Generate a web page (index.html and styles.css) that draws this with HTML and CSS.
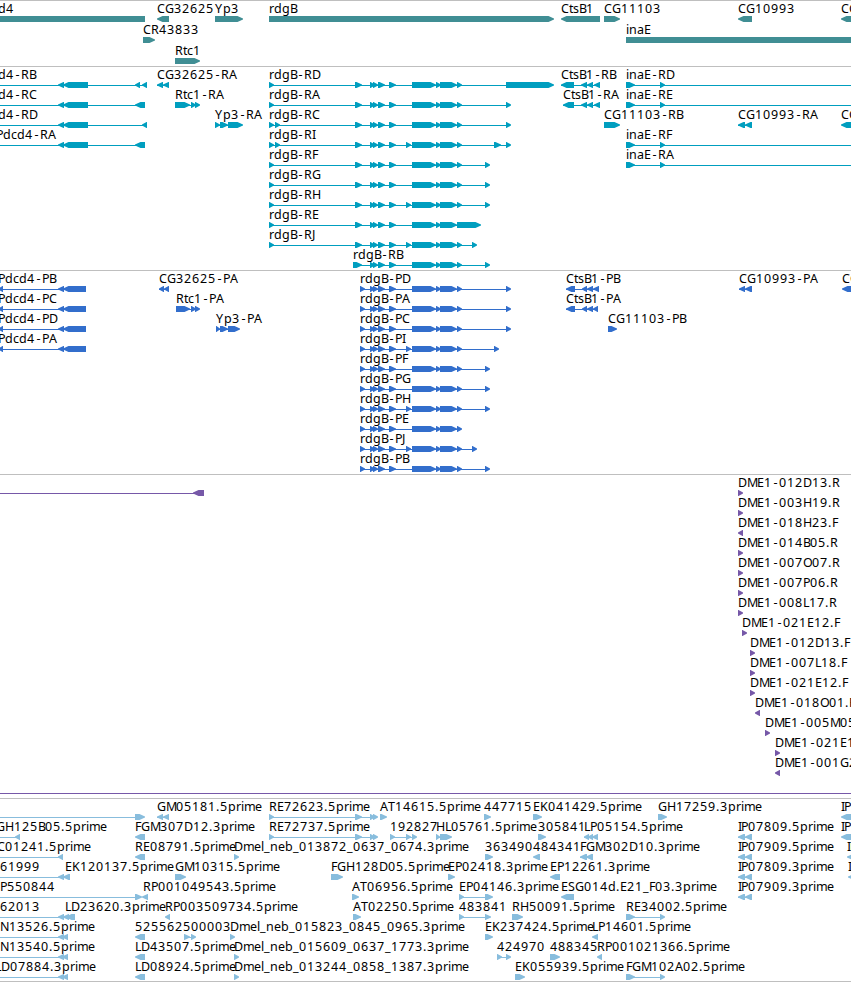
FILE: index.html
```html
<!DOCTYPE html>
<html>

<head>
  <meta charset="utf-8">
  <meta name="viewport" content="width=device-width">
  <title>Genome tracks</title>
  <link rel="stylesheet" href="styles.css">
</head>

<body>
  <main>
    <svg class="track genes" id="genes"></svg>
    <svg class="track transcripts" id="transcripts"></svg>
    <svg class="track proteins" id="proteins"></svg>
    <svg class="track clones" id="clones"></svg>
    <svg class="track ests" id="ests"></svg>
  </main>

  <script src="tracks.js"></script>
</body>

</html>
```

FILE: styles.css
```css
* {
  box-sizing: border-box;
}

body {
  margin: 0;
  background-color: white;
  overflow: hidden;
}

main {
  display: flex;
  flex-direction: column;
  width: 100%;
  border-bottom: 1px solid #bfbfbf;
}

.track {
  display: block;
  width: 100%;
  flex-shrink: 0;
  border-top: 1px solid #bfbfbf;
  overflow: hidden;
}

.track text {
  font-family: "Noto Sans", "DejaVu Sans", sans-serif;
  font-size: 12.5px;
  fill: black;
}

.genes {
  height: 66px;
  color: #408e94;
}

.transcripts {
  height: 204px;
  color: #009ebf;
}

.proteins {
  height: 204px;
  color: #326ecc;
}

.clones {
  height: 324px;
  color: #7658a8;
}

.ests {
  height: 183px;
  color: #88bddd;
}

.line,
.block {
  fill: currentColor;
}

.line {
  shape-rendering: crispEdges;
}
```

FILE: tracks.js
```js
// advance of each character in a label, digits are all 8
const widths = {
  A: 8, B: 7, C: 8, D: 9, E: 7, F: 6, G: 9, H: 9, I: 3, J: 3, K: 8, L: 6, M: 10,
  N: 9, O: 9, P: 7, R: 8, S: 7, T: 7, Y: 8,
  a: 7, b: 8, c: 6, d: 8, e: 7, g: 8, i: 3, l: 3, m: 11, n: 8, p: 8, r: 5, s: 6, t: 4,
  '-': 7, '_': 6, '.': 4
};

// every feature is [row, x, label, strand, block start, block end, ...]
const genes = [
  [0, -23, 'Pdcd4', 0, -23, 145],
  [0, 157, 'CG32625', '<', 157, 169],
  [0, 215, 'Yp3', '>', 215, 243],
  [0, 269, 'rdgB', '>', 269, 554],
  [0, 561, 'CtsB1', '<', 561, 600],
  [0, 604, 'CG11103', '>', 604, 620],
  [0, 738, 'CG10993', '<', 738, 752],
  [0, 841, 'CG10990', '<', 841, 870],
  [1, 143, 'CR43833', '>', 143, 155],
  [1, 626, 'inaE', '>', 626, 900],
  [2, 175, 'Rtc1', '>', 175, 200]
];

const body = [370, 375, 373, 378, 378, 385, 389, 396];
const tail = [412, 436, 436, 441, 440, 457];
const last = [457, 462];
const extra = [406, 411];
const start = [269, 274, 355, 362];
const start2 = [269, 274, 275, 280, 355, 362];

const transcripts = [
  [0, -23, 'Pdcd4-RB', '<', -40, -35, 58, 64, 63, 88, 135, 140, 142, 147],
  [1, -23, 'Pdcd4-RC', '<', -40, -35, 58, 64, 63, 88, 135, 145],
  [2, -23, 'Pdcd4-RD', '<', -40, -35, 58, 64, 63, 88, 142, 147],
  [3, -4, 'Pdcd4-RA', '<', -40, -35, 58, 64, 63, 88, 135, 145],
  [0, 157, 'CG32625-RA', '<', 157, 163, 163, 169],
  [1, 175, 'Rtc1-RA', '>', 175, 190, 191, 196, 195, 200],
  [2, 215, 'Yp3-RA', '>', 215, 220, 220, 228, 228, 243],
  [0, 269, 'rdgB-RD', '>', ...start, ...body, ...tail, ...last, 506, 554],
  [1, 269, 'rdgB-RA', '>', ...start, ...body, ...tail, ...last, 506, 511],
  [2, 269, 'rdgB-RC', '>', ...start2, ...body, ...tail, ...last, 506, 511],
  [3, 269, 'rdgB-RI', '>', ...start2, ...body, ...extra, ...tail, ...last, 494, 501, 506, 511],
  [4, 269, 'rdgB-RF', '>', ...start, ...body, ...tail, ...last, 485, 490],
  [5, 269, 'rdgB-RG', '>', ...start, ...body, ...tail, ...last, 485, 490],
  [6, 269, 'rdgB-RH', '>', ...start, ...body, ...extra, ...tail, ...last, 485, 490],
  [7, 269, 'rdgB-RE', '>', ...start, ...body, ...tail, 457, 481],
  [8, 269, 'rdgB-RJ', '>', ...start, ...body, ...extra, ...tail, ...last, 472, 477],
  [9, 353, 'rdgB-RB', '>', 353, 362, ...body, ...tail, ...last, 485, 490],
  [0, 561, 'CtsB1-RB', '<', 561, 574, 581, 587, 587, 593, 594, 600],
  [1, 563, 'CtsB1-RA', '<', 563, 574, 581, 587, 587, 593, 594, 600],
  [2, 604, 'CG11103-RB', '>', 604, 620],
  [0, 626, 'inaE-RD', '>', 626, 635, 660, 665, 900, 905],
  [1, 626, 'inaE-RE', '>', 626, 635, 660, 665, 900, 905],
  [3, 626, 'inaE-RF', '>', 626, 635, 660, 665, 900, 905],
  [4, 626, 'inaE-RA', '>', 626, 635, 660, 665, 900, 905],
  [2, 738, 'CG10993-RA', '<', 738, 745, 745, 752],
  [2, 841, 'CG10990-RA', '<', 841, 870]
];

const proteins = [
  [0, -2, 'Pdcd4-PB', '<', -2, 3, 58, 64, 63, 86],
  [1, -2, 'Pdcd4-PC', '<', -2, 3, 58, 64, 63, 86],
  [2, -2, 'Pdcd4-PD', '<', -2, 3, 58, 64, 63, 86],
  [3, -2, 'Pdcd4-PA', '<', -2, 3, 58, 64, 63, 86],
  [0, 159, 'CG32625-PA', '<', 159, 164, 164, 169],
  [1, 176, 'Rtc1-PA', '>', 176, 190, 191, 196, 195, 200],
  [2, 216, 'Yp3-PA', '>', 216, 220, 220, 228, 228, 240],
  [0, 360, 'rdgB-PD', '>', 360, 365, ...body, ...tail, ...last, 506, 511],
  [1, 360, 'rdgB-PA', '>', 360, 365, ...body, ...tail, ...last, 506, 511],
  [2, 360, 'rdgB-PC', '>', 360, 365, ...body, ...tail, ...last, 506, 511],
  [3, 360, 'rdgB-PI', '>', 360, 365, ...body, ...extra, ...tail, ...last, 494, 499],
  [4, 360, 'rdgB-PF', '>', 360, 365, ...body, ...tail, ...last, 485, 490],
  [5, 360, 'rdgB-PG', '>', 360, 365, ...body, ...tail, ...last, 485, 490],
  [6, 360, 'rdgB-PH', '>', 360, 365, ...body, ...extra, ...tail, ...last, 485, 490],
  [7, 360, 'rdgB-PE', '>', 360, 365, ...body, ...tail, ...last],
  [8, 360, 'rdgB-PJ', '>', 360, 365, ...body, ...extra, ...tail, ...last, 472, 477],
  [9, 360, 'rdgB-PB', '>', 360, 365, ...body, ...tail, ...last, 485, 490],
  [0, 566, 'CtsB1-PB', '<', 566, 575, 582, 587, 587, 593, 593, 599],
  [1, 566, 'CtsB1-PA', '<', 566, 575, 582, 587, 587, 593, 593, 598],
  [2, 608, 'CG11103-PB', '>', 608, 617],
  [0, 739, 'CG10993-PA', '<', 739, 745, 745, 752],
  [0, 842, 'CG10990-PA', '<', 842, 870]
];

const clones = [
  [0, 0, '', '<', -40, -35, 193, 204],
  [0, 738, 'DME1-012D13.R', '>', 738, 743],
  [1, 738, 'DME1-003H19.R', '>', 738, 743],
  [2, 738, 'DME1-018H23.F', '<', 738, 743],
  [3, 738, 'DME1-014B05.R', '>', 738, 743],
  [4, 738, 'DME1-007O07.R', '>', 738, 743],
  [5, 738, 'DME1-007P06.R', '>', 738, 743],
  [6, 738, 'DME1-008L17.R', '>', 738, 743],
  [7, 742, 'DME1-021E12.F', '>', 742, 747],
  [8, 750, 'DME1-012D13.F', '>', 750, 755],
  [9, 750, 'DME1-007L18.F', '>', 750, 755],
  [10, 750, 'DME1-021E12.F', '>', 750, 755],
  [11, 755, 'DME1-018O01.F', '<', 755, 760],
  [12, 765, 'DME1-005M05.F', '>', 765, 770],
  [13, 775, 'DME1-021E12.R', '>', 775, 780],
  [14, 775, 'DME1-001G23.F', '<', 775, 780],
  [15, 0, '', '>', -40, -35, 900, 905]
];

const ests = [
  [0, 0, '', '>', -40, -35, 135, 145],
  [0, 157, 'GM05181.5prime', '<', 157, 163, 163, 169],
  [0, 269, 'RE72623.5prime', '>', 269, 274, 355, 362, 370, 375, 373, 378],
  [0, 380, 'AT14615.5prime', '>', 380, 387],
  [0, 484, '447715', '>', 484, 491],
  [0, 533, 'EK041429.5prime', '>', 533, 542],
  [0, 658, 'GH17259.3prime', '>', 658, 667],
  [0, 841, 'IP07810.5prime', '<', 841, 870],
  [1, -4, 'GH125B05.5prime', '<', -40, -35, 15, 20],
  [1, 135, 'FGM307D12.3prime', '<', 135, 145],
  [1, 269, 'RE72737.5prime', '>', 269, 274, 355, 362, 370, 375, 373, 378],
  [1, 390, '192827', '>', 390, 395, 406, 411, 412, 417],
  [1, 436, 'HL05761.5prime', '>', 436, 440, 440, 452],
  [1, 538, '305841', '>', 538, 546],
  [1, 584, 'LP05154.5prime', '<', 584, 589, 588, 593, 592, 598],
  [1, 738, 'IP07809.5prime', '<', 738, 745, 745, 752],
  [1, 841, 'IP07910.5prime', '<', 841, 870],
  [2, -3, 'C01241.5prime', '<', -40, -35, 58, 63],
  [2, 135, 'RE08791.5prime', '<', 135, 145],
  [2, 234, 'Dmel_neb_013872_0637_0674.3prime', '>', 234, 239],
  [2, 485, '363490', '>', 485, 493],
  [2, 533, '484341', '<', 533, 540],
  [2, 580, 'FGM302D10.3prime', '<', 580, 587, 586, 593],
  [2, 738, 'IP07909.5prime', '<', 738, 745, 745, 752],
  [2, 847, 'IP07810.3prime', '<', 847, 870],
  [3, 0, '61999', '<', -40, -35, 58, 64],
  [3, 65, 'EK120137.5prime', '<', 63, 70],
  [3, 175, 'GM10315.5prime', '>', 175, 186],
  [3, 331, 'FGH128D05.5prime', '>', 331, 343],
  [3, 448, 'EP02418.3prime', '>', 448, 455],
  [3, 550, 'EP12261.3prime', '<', 550, 560],
  [3, 738, 'IP07809.3prime', '<', 738, 745, 745, 752],
  [3, 848, 'IP07910.3prime', '<', 848, 870],
  [4, 0, 'P550844', '>', -40, -35, 135, 142],
  [4, 143, 'RP001049543.5prime', '<', 142, 148],
  [4, 352, 'AT06956.5prime', '>', 352, 359],
  [4, 459, 'EP04146.3prime', '>', 459, 464, 485, 493],
  [4, 561, 'ESG014d.E21_F03.3prime', '<', 561, 574],
  [4, 738, 'IP07909.3prime', '<', 738, 745, 745, 752],
  [5, 0, '62013', '<', -40, -35, 58, 64, 63, 69],
  [5, 65, 'LD23620.3prime', '<', 66, 75],
  [5, 165, 'RP003509734.5prime', '<', 165, 170],
  [5, 353, 'AT02250.5prime', '>', 353, 361],
  [5, 459, '483841', '>', 459, 464, 485, 491],
  [5, 512, 'RH50091.5prime', '>', 512, 523],
  [5, 626, 'RE34002.5prime', '>', 626, 635, 660, 665],
  [6, 0, 'N13526.5prime', '<', -40, -35, 58, 64, 62, 68],
  [6, 135, '525562', '<', 135, 145],
  [6, 183, '500003', '>', 184, 190, 191, 196],
  [6, 230, 'Dmel_neb_015823_0845_0965.3prime', '>', 230, 235],
  [6, 485, 'EK237424.5prime', '>', 485, 493],
  [6, 592, 'LP14601.5prime', '<', 592, 598],
  [7, 0, 'N13540.5prime', '<', -40, -35, 58, 64, 62, 68],
  [7, 135, 'LD43507.5prime', '<', 135, 145],
  [7, 234, 'Dmel_neb_015609_0637_1773.3prime', '>', 234, 239],
  [7, 497, '424970', '>', 497, 502, 506, 511],
  [7, 550, '488345', '>', 550, 560],
  [7, 597, 'RP001021366.5prime', '<', 597, 602],
  [8, -5, 'LD07884.3prime', '<', -40, -35, 58, 64, 62, 68],
  [8, 135, 'LD08924.5prime', '<', 135, 145],
  [8, 234, 'Dmel_neb_013244_0858_1387.3prime', '>', 234, 239],
  [8, 515, 'EK055939.5prime', '>', 515, 525],
  [8, 626, 'FGM102A02.5prime', '>', 626, 635, 660, 665]
];

function drawLabel(x, y, label) {
  let xs = [];
  let pos = x;

  for (let c of label) {
    // the hyphen is narrow, keep it in the middle of its cell
    xs.push(c === '-' ? pos + 1.5 : pos);
    pos += widths[c] || 8;
  }

  return `<text x="${xs.join(' ')}" y="${y}">${label}</text>`;
}

function drawBlock(a, b, y, strand) {
  let tip = Math.min(6, b - a);
  let points = `${a},${y} ${b},${y} ${b},${y + 6} ${a},${y + 6}`;

  if (strand === '>') {
    points = `${a},${y} ${b - tip + 0.5},${y} ${b},${y + 2.5} ${b},${y + 3.5} ${b - tip + 0.5},${y + 6} ${a},${y + 6}`;
  }
  if (strand === '<') {
    points = `${b},${y} ${a + tip - 0.5},${y} ${a},${y + 2.5} ${a},${y + 3.5} ${a + tip - 0.5},${y + 6} ${b},${y + 6}`;
  }

  return `<polygon class="block" points="${points}"/>`;
}

function drawTrack(id, features, rowHeight) {
  let html = '';

  for (let [row, x, label, strand, ...blocks] of features) {
    let top = row * rowHeight;
    let end = blocks[blocks.length - 1];

    if (label) {
      html += drawLabel(x, top + 12, label);
    }
    if (blocks.length > 2) {
      html += `<rect class="line" x="${blocks[0]}" y="${top + 18}" width="${end - blocks[0] - 1}" height="1"/>`;
    }
    for (let i = 0; i < blocks.length; i += 2) {
      html += drawBlock(blocks[i], blocks[i + 1], top + 15, strand);
    }
  }

  document.querySelector('#' + id).innerHTML = html;
}

drawTrack('genes', genes, 21);
drawTrack('transcripts', transcripts, 20);
drawTrack('proteins', proteins, 20);
drawTrack('clones', clones, 20);
drawTrack('ests', ests, 20);
```
